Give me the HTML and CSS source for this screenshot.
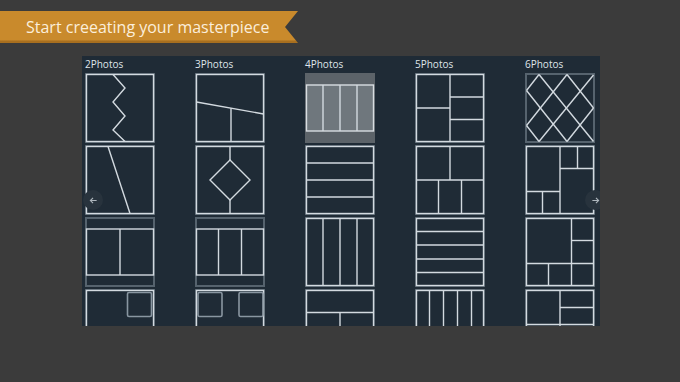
FILE: index.html
```html
<!DOCTYPE html>
<html lang="en">
<head>
  <meta charset="UTF-8">
  <meta name="viewport" content="width=device-width, initial-scale=1">
  <title>Collage Layouts</title>
  <link rel="stylesheet" href="styles.css">
</head>
<body>

  <div class="ribbon">Start creeating your masterpiece</div>

  <div class="picker">
    <div class="columns">

      <!-- 2 photos -->
      <div class="col">
        <div class="col-title">2Photos</div>
        <svg class="tile" viewBox="0 0 70 70">
          <rect class="frame" x="1" y="1" width="68" height="68"/>
          <rect class="lay" x="1.5" y="1.5" width="67" height="67"/>
          <polyline class="lay" points="28,1.5 40,15 28,29 40,43 28,57 40,68.5"/>
        </svg>
        <svg class="tile" viewBox="0 0 70 70">
          <rect class="frame" x="1" y="1" width="68" height="68"/>
          <rect class="lay" x="1.5" y="1.5" width="67" height="67"/>
          <line class="lay" x1="23" y1="1.5" x2="45" y2="68.5"/>
        </svg>
        <svg class="tile" viewBox="0 0 70 70">
          <rect class="frame" x="1" y="1" width="68" height="68"/>
          <rect class="lay" x="1.5" y="12" width="67" height="46"/>
          <line class="lay" x1="35" y1="12" x2="35" y2="58"/>
        </svg>
        <svg class="tile" viewBox="0 0 70 70">
          <rect class="frame" x="1" y="1" width="68" height="68"/>
          <rect class="lay" x="1.5" y="1.5" width="67" height="67"/>
          <rect class="slot" x="42.5" y="3.5" width="24" height="24" rx="1.5"/>
        </svg>
      </div>

      <!-- 3 photos -->
      <div class="col">
        <div class="col-title">3Photos</div>
        <svg class="tile" viewBox="0 0 70 70">
          <rect class="frame" x="1" y="1" width="68" height="68"/>
          <rect class="lay" x="1.5" y="1.5" width="67" height="67"/>
          <line class="lay" x1="1.5" y1="29" x2="68.5" y2="41"/>
          <line class="lay" x1="36" y1="35.2" x2="36" y2="68.5"/>
        </svg>
        <svg class="tile" viewBox="0 0 70 70">
          <rect class="frame" x="1" y="1" width="68" height="68"/>
          <rect class="lay" x="1.5" y="1.5" width="67" height="67"/>
          <line class="lay" x1="35" y1="1.5" x2="35" y2="15"/>
          <polygon class="lay" points="35,15 55,35 35,55 15,35"/>
          <line class="lay" x1="35" y1="55" x2="35" y2="68.5"/>
        </svg>
        <svg class="tile" viewBox="0 0 70 70">
          <rect class="frame" x="1" y="1" width="68" height="68"/>
          <rect class="lay" x="1.5" y="12" width="67" height="46"/>
          <line class="lay" x1="23.5" y1="12" x2="23.5" y2="58"/>
          <line class="lay" x1="46.5" y1="12" x2="46.5" y2="58"/>
        </svg>
        <svg class="tile" viewBox="0 0 70 70">
          <rect class="frame" x="1" y="1" width="68" height="68"/>
          <rect class="lay" x="1.5" y="1.5" width="67" height="67"/>
          <rect class="slot" x="3" y="3.5" width="24" height="24" rx="1.5"/>
          <rect class="slot" x="44" y="3.5" width="24" height="24" rx="1.5"/>
        </svg>
      </div>

      <!-- 4 photos -->
      <div class="col">
        <div class="col-title">4Photos</div>
        <svg class="tile selected" viewBox="0 0 70 70">
          <rect class="sel-bg" x="0" y="0" width="70" height="70"/>
          <rect class="sel-in" x="1.5" y="12" width="67" height="46"/>
          <line class="lay" x1="18" y1="12" x2="18" y2="58"/>
          <line class="lay" x1="35" y1="12" x2="35" y2="58"/>
          <line class="lay" x1="52" y1="12" x2="52" y2="58"/>
        </svg>
        <svg class="tile" viewBox="0 0 70 70">
          <rect class="frame" x="1" y="1" width="68" height="68"/>
          <rect class="lay" x="1.5" y="1.5" width="67" height="67"/>
          <line class="lay" x1="1.5" y1="18" x2="68.5" y2="18"/>
          <line class="lay" x1="1.5" y1="35" x2="68.5" y2="35"/>
          <line class="lay" x1="1.5" y1="52" x2="68.5" y2="52"/>
        </svg>
        <svg class="tile" viewBox="0 0 70 70">
          <rect class="frame" x="1" y="1" width="68" height="68"/>
          <rect class="lay" x="1.5" y="1.5" width="67" height="67"/>
          <line class="lay" x1="18" y1="1.5" x2="18" y2="68.5"/>
          <line class="lay" x1="35" y1="1.5" x2="35" y2="68.5"/>
          <line class="lay" x1="52" y1="1.5" x2="52" y2="68.5"/>
        </svg>
        <svg class="tile" viewBox="0 0 70 70">
          <rect class="frame" x="1" y="1" width="68" height="68"/>
          <rect class="lay" x="1.5" y="1.5" width="67" height="67"/>
          <line class="lay" x1="1.5" y1="23.5" x2="68.5" y2="23.5"/>
          <line class="lay" x1="35" y1="23.5" x2="35" y2="68.5"/>
        </svg>
      </div>

      <!-- 5 photos -->
      <div class="col">
        <div class="col-title">5Photos</div>
        <svg class="tile" viewBox="0 0 70 70">
          <rect class="frame" x="1" y="1" width="68" height="68"/>
          <rect class="lay" x="1.5" y="1.5" width="67" height="67"/>
          <line class="lay" x1="35" y1="1.5" x2="35" y2="68.5"/>
          <line class="lay" x1="1.5" y1="35" x2="35" y2="35"/>
          <line class="lay" x1="35" y1="24" x2="68.5" y2="24"/>
          <line class="lay" x1="35" y1="46.5" x2="68.5" y2="46.5"/>
        </svg>
        <svg class="tile" viewBox="0 0 70 70">
          <rect class="frame" x="1" y="1" width="68" height="68"/>
          <rect class="lay" x="1.5" y="1.5" width="67" height="67"/>
          <line class="lay" x1="1.5" y1="35" x2="68.5" y2="35"/>
          <line class="lay" x1="35" y1="1.5" x2="35" y2="35"/>
          <line class="lay" x1="23.5" y1="35" x2="23.5" y2="68.5"/>
          <line class="lay" x1="46.5" y1="35" x2="46.5" y2="68.5"/>
        </svg>
        <svg class="tile" viewBox="0 0 70 70">
          <rect class="frame" x="1" y="1" width="68" height="68"/>
          <rect class="lay" x="1.5" y="1.5" width="67" height="67"/>
          <line class="lay" x1="1.5" y1="14.5" x2="68.5" y2="14.5"/>
          <line class="lay" x1="1.5" y1="28" x2="68.5" y2="28"/>
          <line class="lay" x1="1.5" y1="42" x2="68.5" y2="42"/>
          <line class="lay" x1="1.5" y1="55.5" x2="68.5" y2="55.5"/>
        </svg>
        <svg class="tile" viewBox="0 0 70 70">
          <rect class="frame" x="1" y="1" width="68" height="68"/>
          <rect class="lay" x="1.5" y="1.5" width="67" height="67"/>
          <line class="lay" x1="14.5" y1="1.5" x2="14.5" y2="68.5"/>
          <line class="lay" x1="28.5" y1="1.5" x2="28.5" y2="68.5"/>
          <line class="lay" x1="42.5" y1="1.5" x2="42.5" y2="68.5"/>
          <line class="lay" x1="56.5" y1="1.5" x2="56.5" y2="68.5"/>
        </svg>
      </div>

      <!-- 6 photos -->
      <div class="col">
        <div class="col-title">6Photos</div>
        <svg class="tile" viewBox="0 0 70 70">
          <rect class="frame" x="1" y="1" width="68" height="68"/>
          <line class="lay" x1="14" y1="1.5" x2="1.5" y2="17.5"/>
          <line class="lay" x1="42" y1="1.5" x2="1.5" y2="52.5"/>
          <line class="lay" x1="68.5" y1="2" x2="14" y2="68.5"/>
          <line class="lay" x1="68.5" y1="35" x2="42" y2="68.5"/>
          <line class="lay" x1="14" y1="1.5" x2="68.5" y2="68.5"/>
          <line class="lay" x1="42" y1="1.5" x2="68.5" y2="35"/>
          <line class="lay" x1="1.5" y1="17.5" x2="42" y2="68.5"/>
          <line class="lay" x1="1.5" y1="52.5" x2="14" y2="68.5"/>
        </svg>
        <svg class="tile" viewBox="0 0 70 70">
          <rect class="frame" x="1" y="1" width="68" height="68"/>
          <rect class="lay" x="1.5" y="1.5" width="67" height="67"/>
          <line class="lay" x1="35" y1="1.5" x2="35" y2="68.5"/>
          <line class="lay" x1="1.5" y1="46.5" x2="35" y2="46.5"/>
          <line class="lay" x1="17.5" y1="46.5" x2="17.5" y2="68.5"/>
          <line class="lay" x1="35" y1="23.5" x2="68.5" y2="23.5"/>
          <line class="lay" x1="52.5" y1="1.5" x2="52.5" y2="23.5"/>
        </svg>
        <svg class="tile" viewBox="0 0 70 70">
          <rect class="frame" x="1" y="1" width="68" height="68"/>
          <rect class="lay" x="1.5" y="1.5" width="67" height="67"/>
          <line class="lay" x1="46.5" y1="1.5" x2="46.5" y2="68.5"/>
          <line class="lay" x1="1.5" y1="46.5" x2="68.5" y2="46.5"/>
          <line class="lay" x1="46.5" y1="23.5" x2="68.5" y2="23.5"/>
          <line class="lay" x1="23.5" y1="46.5" x2="23.5" y2="68.5"/>
        </svg>
        <svg class="tile" viewBox="0 0 70 70">
          <rect class="frame" x="1" y="1" width="68" height="68"/>
          <rect class="lay" x="1.5" y="1.5" width="67" height="67"/>
          <line class="lay" x1="35" y1="1.5" x2="35" y2="68.5"/>
          <line class="lay" x1="35" y1="18.5" x2="68.5" y2="18.5"/>
          <line class="lay" x1="1.5" y1="35.5" x2="68.5" y2="35.5"/>
        </svg>
      </div>

    </div>

    <!-- scroll arrows -->
    <span class="nav nav-left">
      <svg viewBox="0 0 10 10"><path d="M8.5 5H1.5M4.5 2L1.5 5L4.5 8"/></svg>
    </span>
    <span class="nav nav-right">
      <svg viewBox="0 0 10 10"><path d="M1.5 5H8.5M5.5 2L8.5 5L5.5 8"/></svg>
    </span>
  </div>

</body>
</html>
```

FILE: styles.css
```css
body {
  margin: 0;
  background-color: #3b3b3b;
  font-family: "Open Sans", "Noto Sans", sans-serif;
}

.ribbon {
  width: 298px;
  height: 32px;
  margin-top: 11px;
  padding-left: 26px;
  box-sizing: border-box;
  background: linear-gradient(to bottom, #c98a2c 0, #c98a2c 29px, #a86f1f 30px);
  color: #fbeedb;
  font-size: 16px;
  line-height: 32px;
  clip-path: polygon(0 0, 100% 0, 285px 50%, 100% 100%, 0 100%);
}

.picker {
  position: relative;
  width: 518px;
  height: 270px;
  margin: 13px 0 0 82px;
  background-color: #1f2b36;
  overflow: hidden;
}

.columns {
  display: flex;
  gap: 40px;
  padding-left: 3px;
}

.col {
  display: flex;
  flex-direction: column;
  gap: 2px;
  width: 70px;
}

.col-title {
  height: 15px;
  line-height: 17px;
  color: #dfe5ea;
  font-size: 10px;
}

.tile {
  display: block;
  width: 70px;
  height: 70px;
}

.frame {
  fill: none;
  stroke: #56636e;
  stroke-width: 2;
}

.lay {
  fill: none;
  stroke: #d3dae0;
  stroke-width: 1.4;
}

.slot {
  fill: none;
  stroke: #8996a1;
  stroke-width: 1.6;
}

.sel-bg {
  fill: #5c6369;
}

.sel-in {
  fill: #6f777d;
  stroke: #d8dde1;
  stroke-width: 1.4;
}

.nav {
  position: absolute;
  top: 134px;
  width: 20px;
  height: 20px;
  border-radius: 50%;
  background-color: #28333d;
  display: flex;
  align-items: center;
  justify-content: center;
}

.nav svg {
  width: 9px;
  height: 9px;
  fill: none;
  stroke: #aeb6bd;
  stroke-width: 1.2;
}

.nav-left {
  left: 1px;
}

.nav-right {
  left: 503px;
}
```
